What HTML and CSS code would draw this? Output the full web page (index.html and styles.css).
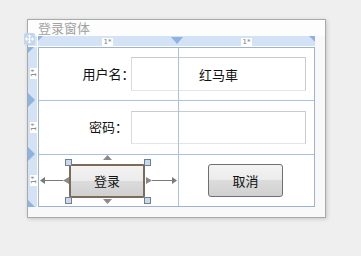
FILE: index.html
```html
<!DOCTYPE html>
<html>
<head>
<meta charset="utf-8">
<link rel="stylesheet" href="styles.css">
</head>
<body>
<div class="window">
  <div class="move-icon">
    <svg width="11" height="12" viewBox="0 0 11 12"><rect x="0" y="0" width="11" height="12" rx="2" fill="#c3d6ee"/><g fill="#ffffff"><path d="M5.5 1.5 L7.5 3.5 L3.5 3.5 Z"/><path d="M5.5 10.5 L7.5 8.5 L3.5 8.5 Z"/><path d="M1 6 L3 4 L3 8 Z"/><path d="M10 6 L8 4 L8 8 Z"/><rect x="5" y="3" width="1" height="6"/><rect x="2.5" y="5.5" width="6" height="1"/></g></svg>
  </div>
  <div class="title">登录窗体</div>
  <div class="designer">
    <div class="corner"></div>
    <div class="ruler-top">
      <span class="tri-corner tl"></span>
      <span class="rlabel c1">1*</span>
      <span class="tri-down"></span>
      <span class="rlabel c2">1*</span>
      <span class="tri-corner tr"></span>
    </div>
    <div class="ruler-left">
      <span class="tri-corner lt"></span>
      <span class="vlabel r1">1*</span>
      <span class="tri-right t1"></span>
      <span class="vlabel r2">1*</span>
      <span class="tri-right t2"></span>
      <span class="vlabel r3">1*</span>
      <span class="tri-corner lb"></span>
    </div>
    <div class="form">
      <div class="label l1">用户名：</div>
      <div class="textbox t1">红马車</div>
      <div class="label l2">密码：</div>
      <div class="textbox t2"></div>
      <div class="sel">
        <div class="btn login">登录</div>
        <span class="handle h-tl"></span>
        <span class="handle h-tr"></span>
        <span class="handle h-bl"></span>
        <span class="handle h-br"></span>
        <svg class="arr arr-l" width="29" height="9" viewBox="0 0 29 9"><path d="M0 4.5 L5 1 L5 8 Z" fill="#7a7a7a"/><rect x="5" y="4" width="18" height="1" fill="#7a7a7a"/><path d="M23 4.5 L29 1 L29 8 Z" fill="#8a8a8a"/></svg>
        <svg class="arr arr-r" width="31" height="9" viewBox="0 0 31 9"><path d="M6 4.5 L0 1 L0 8 Z" fill="#8a8a8a"/><rect x="6" y="4" width="20" height="1" fill="#7a7a7a"/><path d="M31 4.5 L26 1 L26 8 Z" fill="#7a7a7a"/></svg>
        <svg class="arr arr-u" width="9" height="5" viewBox="0 0 9 5"><path d="M4.5 0 L9 5 L0 5 Z" fill="#8a8a8a"/></svg>
        <svg class="arr arr-d" width="9" height="5" viewBox="0 0 9 5"><path d="M4.5 5 L9 0 L0 0 Z" fill="#8a8a8a"/></svg>
      </div>
      <div class="btn cancel">取消</div>
      <span class="vline"></span>
      <span class="hline a"></span>
      <span class="hline b"></span>
    </div>
  </div>
</div>
</body>
</html>
```
FILE: styles.css
```css
html, body {
  margin: 0;
  padding: 0;
}
body {
  width: 361px;
  height: 256px;
  background: #efefef;
  overflow: hidden;
  font-family: "Noto Sans CJK SC", "Noto Sans", sans-serif;
}
.window {
  position: relative;
  margin: 19px 0 0 27px;
  width: 297px;
  height: 197px;
  border: 1px solid #a9a9a9;
  background: #f8f8f8;
  box-shadow: 1px 1px 4px rgba(0, 0, 0, 0.18);
}
.move-icon {
  position: absolute;
  left: -4px;
  top: 13px;
  width: 11px;
  height: 12px;
  z-index: 5;
}
.move-icon svg { display: block; }
.title {
  height: 16px;
  padding-left: 10px;
  font-size: 13px;
  line-height: 15px;
  color: #a2a2a2;
  background: #fdfdfd;
}
.designer {
  display: grid;
  grid-template-columns: 10px 277px;
  grid-template-rows: 11px 160px;
}
.corner {
  background: #d6e5f6;
  border-bottom: 1px solid #fff;
  border-right: 1px solid #fff;
  box-sizing: border-box;
}
.ruler-top {
  position: relative;
  background: #d3e2f5;
  border-bottom: 1px solid #fff;
  box-sizing: border-box;
}
.ruler-left {
  position: relative;
  background: #d3e2f5;
  border-right: 1px solid #fff;
  box-sizing: border-box;
}
.rlabel {
  position: absolute;
  top: 2px;
  width: 11px;
  height: 8px;
  background: #fff;
  font-family: "DejaVu Sans", sans-serif;
  font-size: 7px;
  line-height: 8px;
  text-align: center;
  color: #777;
}
.rlabel.c1 { left: 64px; }
.rlabel.c2 { left: 203px; }
.vlabel {
  position: absolute;
  left: 2px;
  width: 8px;
  height: 11px;
  background: #fff;
  font-family: "DejaVu Sans", sans-serif;
  font-size: 7px;
  line-height: 8px;
  color: #777;
  writing-mode: vertical-rl;
  transform: rotate(180deg);
  text-align: center;
}
.vlabel.r1 { top: 21px; }
.vlabel.r2 { top: 75px; }
.vlabel.r3 { top: 128px; }
.tri-down {
  position: absolute;
  left: 133px;
  top: 1px;
  width: 0;
  height: 0;
  border-left: 6px solid transparent;
  border-right: 6px solid transparent;
  border-top: 7px solid #8db3e2;
}
.tri-right {
  position: absolute;
  left: 0;
  width: 0;
  height: 0;
  border-top: 7px solid transparent;
  border-bottom: 7px solid transparent;
  border-left: 7px solid #8db3e2;
}
.tri-right.t1 { top: 46px; }
.tri-right.t2 { top: 100px; }
.tri-corner {
  position: absolute;
  width: 0;
  height: 0;
}
.tri-corner.tl {
  left: 0;
  top: 0;
  border-top: 5px solid #8db3e2;
  border-right: 5px solid transparent;
}
.tri-corner.tr {
  right: 0;
  top: 0;
  border-top: 6px solid #8db3e2;
  border-left: 6px solid transparent;
}
.tri-corner.lt {
  left: 0;
  top: 0;
  border-top: 6px solid #8db3e2;
  border-right: 6px solid transparent;
}
.tri-corner.lb {
  left: 0;
  bottom: 0;
  border-bottom: 7px solid #8db3e2;
  border-right: 7px solid transparent;
}
.form {
  position: relative;
  display: grid;
  grid-template-columns: 92px 47px 1fr;
  grid-template-rows: 52px 54px 1fr;
  border: 1px solid #9cb3d4;
  background: #fff;
  box-sizing: border-box;
}
.label {
  grid-column: 1 / 3;
  align-self: center;
  text-align: center;
  font-size: 13px;
  line-height: 16px;
  color: #111;
}
.label.l1 { grid-row: 1; }
.label.l2 { grid-row: 2; }
.textbox {
  grid-column: 2 / 4;
  align-self: center;
  margin-right: 8px;
  box-sizing: border-box;
  border: 1px solid #cbcbcb;
  border-left-color: #d9d9d9;
  border-bottom-color: #e2e6ea;
  display: flex;
  align-items: center;
  justify-content: center;
  font-size: 13px;
  color: #111;
  background: #fff;
}
.textbox.t1 { grid-row: 1; height: 34px; }
.textbox.t2 { grid-row: 2; height: 33px; }
.sel {
  position: relative;
  grid-column: 1 / 3;
  grid-row: 3;
  align-self: center;
  justify-self: start;
  margin-left: 30px;
  margin-top: 1px;
}
.btn {
  box-sizing: border-box;
  display: flex;
  align-items: center;
  justify-content: center;
  font-size: 13px;
  color: #111;
  background: linear-gradient(#f3f3f3 0%, #ebebeb 50%, #dcdcdc 50%, #d0d0d0 100%);
}
.btn.login {
  width: 76px;
  height: 34px;
  border: 2px solid #7d6b59;
  border-radius: 2px;
}
.btn.cancel {
  grid-column: 3;
  grid-row: 3;
  align-self: center;
  justify-self: start;
  margin-left: 30px;
  width: 75px;
  height: 33px;
  border: 1px solid #6f6f6f;
  border-radius: 3px;
}
.handle {
  position: absolute;
  width: 5px;
  height: 5px;
  background: #c9d9ea;
  border: 1px solid #6d7f94;
  z-index: 2;
}
.h-tl { left: -4px; top: -5px; }
.h-tr { left: 75px; top: -5px; }
.h-bl { left: -4px; top: 33px; }
.h-br { left: 75px; top: 33px; }
.arr {
  position: absolute;
  display: block;
}
.arr-l { left: -29px; top: 12px; }
.arr-r { left: 77px; top: 12px; }
.arr-u { left: 34px; top: -9px; }
.arr-d { left: 34px; top: 35px; }
.vline {
  position: absolute;
  left: 139px;
  top: 0;
  bottom: 0;
  width: 1px;
  background: #a9c1e2;
}
.hline {
  position: absolute;
  left: 0;
  right: 0;
  height: 1px;
  background: #a9c1e2;
}
.hline.a { top: 52px; }
.hline.b { top: 106px; }
```
